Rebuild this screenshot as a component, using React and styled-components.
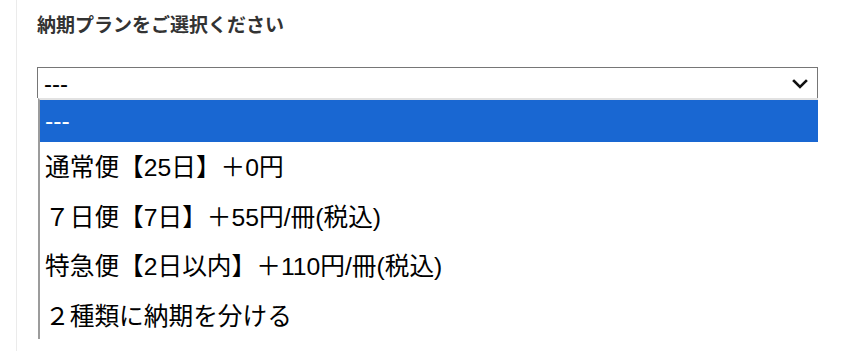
import styled, { createGlobalStyle } from "styled-components";

const GlobalStyle = createGlobalStyle`
  html, body {
    margin: 0;
    padding: 0;
    background: #ffffff;
  }
  body {
    font-family: "Liberation Sans", "Noto Sans CJK JP", sans-serif;
  }
`;

const Page = styled.div`
  height: 351px;
  overflow: hidden;
  padding-left: 16px;
  box-sizing: border-box;
`;

const Panel = styled.div`
  height: 100%;
  width: 802px;
  border-left: 1px solid #ebebeb;
  padding: 14px 0 0 20px;
  box-sizing: border-box;
  display: flex;
  flex-direction: column;
`;

const Title = styled.h2`
  margin: 0;
  font-family: "Liberation Sans", "Noto Sans CJK JP", sans-serif;
  font-size: 19px;
  line-height: 24px;
  font-weight: bold;
  color: #333333;
`;

const Field = styled.div`
  margin-top: 29px;
  width: 781px;
  display: flex;
  flex-direction: column;
`;

const SelectBox = styled.div`
  height: 31px;
  box-sizing: border-box;
  border: 1px solid #767676;
  border-bottom: none;
  display: flex;
  align-items: center;
  justify-content: space-between;
  padding: 0 6px 0 6px;
  font-size: 24px;
  color: #000000;
`;

const Value = styled.span`
  line-height: 1;
  padding-top: 2px;
`;

const Chevron = styled.svg`
  width: 16px;
  height: 10px;
  margin: 2px 3px 0 0;
`;

const OptionList = styled.ul`
  list-style: none;
  margin: 0 0 0 1px;
  padding: 0;
  border-top: 2px solid #e2e2e2;
  border-left: 2px solid #9c9c9c;
  height: 241px;
  box-sizing: border-box;
`;

const Option = styled.li`
  height: ${(p) => (p.$active ? "42px" : "49.5px")};
  display: flex;
  align-items: center;
  padding-left: 5px;
  padding-bottom: ${(p) => (p.$active ? "0" : "3px")};
  box-sizing: border-box;
  font-size: 24.7px;
  color: ${(p) => (p.$active ? "#ffffff" : "#000000")};
  background: ${(p) => (p.$active ? "#1967d2" : "transparent")};
  white-space: nowrap;
`;

const options = [
  "---",
  "通常便【25日】＋0円",
  "７日便【7日】＋55円/冊(税込)",
  "特急便【2日以内】＋110円/冊(税込)",
  "２種類に納期を分ける",
];

export default function App() {
  return (
    <>
      <GlobalStyle />
      <Page>
        <Panel>
          <Title>納期プランをご選択ください</Title>
          <Field>
            <SelectBox>
              <Value>---</Value>
              <Chevron viewBox="0 0 16 10">
                <path
                  d="M2 2 L8 8 L14 2"
                  fill="none"
                  stroke="#111"
                  strokeWidth="2.6"
                  strokeLinecap="square"
                />
              </Chevron>
            </SelectBox>
            <OptionList>
              {options.map((o, i) => (
                <Option key={o} $active={i === 0}>
                  {o}
                </Option>
              ))}
            </OptionList>
          </Field>
        </Panel>
      </Page>
    </>
  );
}
